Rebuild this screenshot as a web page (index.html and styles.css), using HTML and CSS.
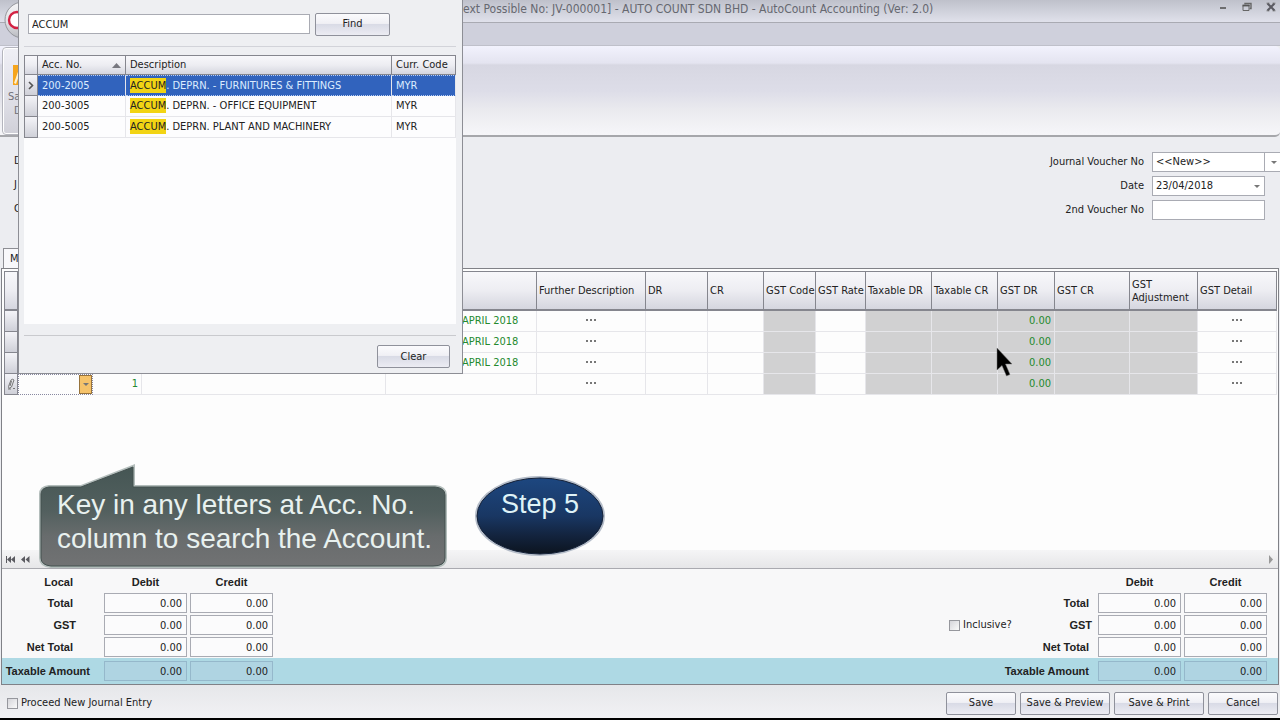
FILE: index.html
```
<!DOCTYPE html>
<html lang="en">
<head>
<meta charset="utf-8">
<title>Journal Entry - AutoCount Accounting</title>
<link rel="stylesheet" href="styles.css">
</head>
<body>
<div class="window">
  <header class="titlebar">
    <div class="title">ext Possible No: JV-000001] - AUTO COUNT SDN BHD - AutoCount Accounting (Ver: 2.0)</div>
    <div class="window-buttons">
      <button class="window-button" aria-label="Minimize"><svg width="10" height="10" viewBox="0 0 10 10"><path d="M2 6h6" stroke="#555" stroke-width="1.6"/></svg></button>
      <button class="window-button" aria-label="Restore"><svg width="10" height="10" viewBox="0 0 10 10" fill="none" stroke="#666"><path d="M3 2.5V1.5H9V6.5H7.5" stroke-width="1.4"/><path d="M1 3.5h6.500M1 3.500v5h6v-5" stroke-width="1"/><path d="M.5 3.500h7" stroke="#555" stroke-width="1.800"/></svg></button>
      <button class="window-button" aria-label="Close"><svg width="10" height="10" viewBox="0 0 10 10"><path d="M1.500 1.500l7 7M8.500 1.500l-7 7" stroke="#5a5a62" stroke-width="2"/><path d="M.5 1.200h3M6.500 1.200h3M.5 8.800h3M6.500 8.800h3" stroke="#666" stroke-width=".8"/></svg></button>
    </div>
  </header>
  <svg class="app-logo" width="38" height="38" viewBox="0 0 38 38">
    <defs><linearGradient id="orb" x1="0" y1="0" x2="0" y2="1"><stop offset="0" stop-color="#f4f4f6"/><stop offset=".55" stop-color="#e2e2e6"/><stop offset="1" stop-color="#b8babf"/></linearGradient></defs>
    <circle cx="19" cy="19" r="18" fill="url(#orb)" stroke="#94969c"/>
    <circle cx="13" cy="19" r="8" fill="#fff" stroke="#d32344" stroke-width="2.400"/>
  </svg>
  <div class="tab-strip"></div>
  <div class="ribbon">
    <button class="ribbon-group">
      <svg width="24" height="22" viewBox="0 0 24 22"><rect width="24" height="20" y="1" fill="#f6a51c"/><path d="M1 19L6 5l2 1L3 20z" fill="#fff2cf"/></svg>
      <span>Sa</span><span class="ribbon-second">D</span>
    </button>
  </div>
  <main class="form">
    <div class="left-labels"><span>D</span><span>J</span><span>O</span></div>
    <div class="fields">
      <label for="voucher">Journal Voucher No</label>
      <div class="combo combo-wide"><select id="voucher"><option>&lt;&lt;New&gt;&gt;</option></select><span class="drop drop-split"><i class="arrow"></i></span></div>
      <label for="date">Date</label>
      <div class="combo"><input id="date" value="23/04/2018"><span class="drop"><i class="arrow"></i></span></div>
      <label for="second">2nd Voucher No</label>
      <div class="combo"><input id="second"></div>
    </div>
  </main>
  <div class="page-tabs"><button class="page-tab">M</button></div>
  <section class="panel">
    <div class="grid-area">
      <table class="grid">
        <colgroup><col class="w14"><col class="w75"><col class="w49"><col class="w244"><col class="w151"><col class="w109"><col class="w62"><col class="w56"><col class="w52"><col class="w50"><col class="w66"><col class="w66"><col class="w57"><col class="w75"><col class="w68"><col></colgroup>
        <thead><tr><th></th><th></th><th></th><th></th><th></th><th>Further Description</th><th>DR</th><th>CR</th><th>GST Code</th><th>GST Rate</th><th>Taxable DR</th><th>Taxable CR</th><th>GST DR</th><th>GST CR</th><th>GST Adjustment</th><th>GST Detail</th></tr></thead>
        <tbody>
          <tr><td class="mark"></td><td></td><td></td><td></td><td class="memo">APRIL 2018</td><td class="dots"><i></i><i></i><i></i></td><td></td><td></td><td class="off"></td><td></td><td class="off"></td><td class="off"></td><td class="off num">0.00</td><td class="off"></td><td class="off"></td><td class="dots"><i></i><i></i><i></i></td></tr>
          <tr><td class="mark"></td><td></td><td></td><td></td><td class="memo">APRIL 2018</td><td class="dots"><i></i><i></i><i></i></td><td></td><td></td><td class="off"></td><td></td><td class="off"></td><td class="off"></td><td class="off num">0.00</td><td class="off"></td><td class="off"></td><td class="dots"><i></i><i></i><i></i></td></tr>
          <tr><td class="mark"></td><td></td><td></td><td></td><td class="memo">APRIL 2018</td><td class="dots"><i></i><i></i><i></i></td><td></td><td></td><td class="off"></td><td></td><td class="off"></td><td class="off"></td><td class="off num">0.00</td><td class="off"></td><td class="off"></td><td class="dots"><i></i><i></i><i></i></td></tr>
          <tr><td class="mark"><svg width="9" height="12" viewBox="0 0 9 12" fill="none" stroke="#777" stroke-width="1"><path d="M1.500 8.500L4 2q1.500-1.500 3 0L4.500 9 2 10.500zM4.500 3L3 8M1 11h3M6 10.500h2"/></svg></td><td class="editor"><div><input aria-label="Acc. No."><button aria-label="Open list"><i class="arrow"></i></button></div></td><td class="num">1</td><td></td><td></td><td class="dots"><i></i><i></i><i></i></td><td></td><td></td><td class="off"></td><td></td><td class="off"></td><td class="off"></td><td class="off num">0.00</td><td class="off"></td><td class="off"></td><td class="dots"><i></i><i></i><i></i></td></tr>
        </tbody>
      </table>
    </div>
    <div class="scrollbar">
      <svg width="34" height="9" viewBox="0 0 34 9" fill="#5a5a60"><path d="M1 1h1v7H1zM6 1v7L2 4.500zM10 1v7L6 4.500zM20 1v7L16 4.500zM24.500 1v7l-4-3.500z"/></svg>
      <svg width="6" height="9" viewBox="0 0 6 9"><path d="M1 0v9l4-4.500z" fill="#999"/></svg>
    </div>
    <div class="totals">
      <div class="total-row head"><div class="group"><b class="name">Local</b><b>Debit</b><b>Credit</b></div><div class="group right"><span></span><b>Debit</b><b>Credit</b></div></div>
      <div class="total-row"><div class="group"><b class="name">Total</b><input aria-label="Local total debit" value="0.00"><input aria-label="Local total credit" value="0.00"></div><div class="group right"><b class="name">Total</b><input aria-label="Total debit" value="0.00"><input aria-label="Total credit" value="0.00"></div></div>
      <div class="total-row"><div class="group"><b class="name gst">GST</b><input aria-label="Local GST debit" value="0.00"><input aria-label="Local GST credit" value="0.00"></div><div class="group right"><div class="with-check"><label class="check"><input type="checkbox">Inclusive?</label><b class="name gst">GST</b></div><input aria-label="GST debit" value="0.00"><input aria-label="GST credit" value="0.00"></div></div>
      <div class="total-row"><div class="group"><b class="name">Net Total</b><input aria-label="Local net debit" value="0.00"><input aria-label="Local net credit" value="0.00"></div><div class="group right"><b class="name">Net Total</b><input aria-label="Net debit" value="0.00"><input aria-label="Net credit" value="0.00"></div></div>
      <div class="total-row taxable"><div class="group"><b class="name wide">Taxable Amount</b><input aria-label="Local taxable debit" value="0.00"><input aria-label="Local taxable credit" value="0.00"></div><div class="group right"><b class="name">Taxable Amount</b><input aria-label="Taxable debit" value="0.00"><input aria-label="Taxable credit" value="0.00"></div></div>
    </div>
  </section>
  <footer class="footer">
    <label class="check"><input type="checkbox">Proceed New Journal Entry</label>
    <div class="actions"><button class="btn w70">Save</button><button class="btn w90">Save &amp; Preview</button><button class="btn w90">Save &amp; Print</button><button class="btn w70">Cancel</button></div>
  </footer>

  <section class="popup">
    <div class="search"><input aria-label="Search accounts" value="ACCUM"><button class="btn">Find</button></div>
    <div class="results">
      <table>
        <colgroup><col class="w14"><col class="w88"><col><col class="w64"></colgroup>
        <thead><tr><th></th><th><div class="sorted">Acc. No.<svg width="9" height="5" viewBox="0 0 9 5"><path d="M0 5L4.500 0 9 5z" fill="#77777f"/></svg></div></th><th>Description</th><th>Curr. Code</th></tr></thead>
        <tbody>
          <tr class="selected"><td class="mark"><svg width="6" height="9" viewBox="0 0 6 9"><path d="M1 1l3.500 3.500L1 8" fill="none" stroke="#555" stroke-width="1.600"/></svg></td><td>200-2005</td><td><mark>ACCUM</mark>. DEPRN. - FURNITURES &amp; FITTINGS</td><td>MYR</td></tr>
          <tr><td class="mark"></td><td>200-3005</td><td><mark>ACCUM</mark>. DEPRN. - OFFICE EQUIPMENT</td><td>MYR</td></tr>
          <tr><td class="mark"></td><td>200-5005</td><td><mark>ACCUM</mark>. DEPRN. PLANT AND MACHINERY</td><td>MYR</td></tr>
        </tbody>
      </table>
    </div>
    <div class="popup-footer"><button class="btn">Clear</button></div>
  </section>

  <div class="callout">
    <svg width="412" height="106" viewBox="0 0 412 106">
      <defs><linearGradient id="slate" x1="0" y1="0" x2="0" y2="1"><stop offset="0" stop-color="#455654"/><stop offset=".45" stop-color="#53605f"/><stop offset=".7" stop-color="#686c6d"/><stop offset="1" stop-color="#717273"/></linearGradient></defs>
      <path d="M12 23H44L96 3V23H398Q408 24 408 31V94Q408 102 396 102H14Q4 101 4 94V30Q4 24 12 23Z" fill="none" stroke="#b3bdbb" stroke-width="4"/>
      <path d="M12 23H44L96 3V23H398Q408 24 408 31V94Q408 102 396 102H14Q4 101 4 94V30Q4 24 12 23Z" fill="url(#slate)" stroke="#43504f"/>
    </svg>
    <p>Key in any letters at Acc. No.<br>column to search the Account.</p>
  </div>
  <div class="step">
    <svg width="132" height="82" viewBox="0 0 132 82">
      <defs><linearGradient id="navy" x1="0" y1="0" x2="0" y2="1"><stop offset="0" stop-color="#1d4780"/><stop offset=".5" stop-color="#193763"/><stop offset=".75" stop-color="#13243f"/><stop offset="1" stop-color="#0c141f"/></linearGradient></defs>
      <ellipse cx="66" cy="41" rx="63" ry="38" fill="none" stroke="#b5bdc9" stroke-width="4"/>
      <ellipse cx="66" cy="41" rx="63" ry="38" fill="url(#navy)" stroke="#142138" stroke-width="1"/>
    </svg>
    <p>Step 5</p>
  </div>
  <svg class="cursor" width="18" height="32" viewBox="0 0 18 32"><path d="M1 1V23L6 18.500L10.500 29L14 27.500L9.500 17H16Z" fill="#000" stroke="#777" stroke-width=".5"/></svg>
</div>
</body>
</html>
```
FILE: styles.css
```
* { box-sizing: border-box; }
body { margin: 0; background: #ecedf1; color: #222; font: 11px/14px "DejaVu Sans Condensed", Tahoma, sans-serif; }
button, input, select { font: inherit; color: inherit; margin: 0; }
button { padding: 0; }
p { margin: 0; }

.window { position: relative; display: flex; flex-direction: column; min-height: 100vh; overflow: hidden; border-bottom: 2px solid #000; }
.titlebar { display: flex; justify-content: space-between; height: 23px; padding-left: 463px; background: linear-gradient(#bfc1cb, #e0e1eb); border-bottom: 1px solid #a9aab2; }
.title { font-size: 12px; line-height: 18px; color: #666870; white-space: nowrap; }
.window-buttons { display: flex; gap: 14px; padding: 2px 4px 0 0; }
.window-button { display: flex; width: 10px; height: 10px; border: 0; background: none; }
.app-logo { position: absolute; left: 4px; top: 1px; }
.tab-strip { height: 23px; background: #cfd0dc; border-bottom: 1px solid #bfc0ca; }
.ribbon { height: 91px; padding: 1px 0 0 2px; border-bottom: 2px solid #a6a7ab; border-radius: 0 5px 5px 0; background: linear-gradient(#f2f2fd 0, #e4e4f0 17px, #d7d7e2 19px, #dddde8 45px, #ebebef 65px, #f6f6f9 100%); }
.ribbon-group { display: flex; flex-direction: column; align-items: flex-start; width: 60px; height: 88px; padding: 15px 0 0 9px; color: #707078; border: 2px solid #fff; outline: 1px solid #b4b5bd; outline-offset: -1px; border-radius: 4px; background: linear-gradient(#efeff5, #dcdce4 70%, #d0d0d8); }
.ribbon-group svg { margin: 0 0 4px; }
.ribbon-group span { margin-left: -5px; }
.ribbon-group .ribbon-second { margin-left: 1px; }

.form { display: flex; justify-content: space-between; padding: 15px 0 0 14px; height: 111px; }
.left-labels { display: flex; flex-direction: column; gap: 10px; padding-top: 2px; }
.fields { display: grid; grid-template-columns: auto 128px; column-gap: 8px; row-gap: 4px; align-content: start; align-items: center; text-align: right; }
.combo { position: relative; display: flex; width: 113px; height: 20px; border: 1px solid #a9abb3; background: #fff; }
.combo-wide { width: 128px; border-right: 0; }
.combo input, .combo select { flex: 1; min-width: 0; padding: 0 3px; border: 0; background: none; appearance: none; outline: 0; }
.drop { display: flex; width: 14px; align-items: center; justify-content: center; }
.drop-split { width: 16px; padding-left: 3px; border-left: 1px solid #a9abb3; }
.arrow { width: 0; height: 0; border: 3px solid transparent; border-top-color: #777; border-bottom: 0; }
.page-tabs { display: flex; height: 20px; padding-left: 3px; }
.page-tab { width: 60px; padding-left: 6px; text-align: left; background: #f8f8fb; border: 1px solid #8d8e94; border-bottom: 0; }

.panel { flex: 1; display: flex; flex-direction: column; margin: 0 1px; border: 1px solid #808187; background: #fdfdfd; }
.grid-area { flex: 1; padding: 2px 1px 0 2px; }
table { width: 100%; table-layout: fixed; border-collapse: separate; border-spacing: 0; }
.w14 { width: 14px; } .w75 { width: 75px; } .w49 { width: 49px; } .w244 { width: 244px; } .w151 { width: 151px; } .w109 { width: 109px; } .w62 { width: 62px; } .w56 { width: 56px; } .w52 { width: 52px; } .w50 { width: 50px; } .w66 { width: 66px; } .w57 { width: 57px; } .w68 { width: 68px; } .w88 { width: 88px; } .w64 { width: 64px; } .w70 { width: 70px; } .w90 { width: 90px; }
th { padding: 0 3px; text-align: left; font-weight: normal; border: 1px solid #85868e; border-width: 1px 1px 1px 0; background: linear-gradient(#f8f8fb, #ededf2 50%, #d5d6df); }
.grid th { height: 40px; padding: 0 2px; line-height: 13px; border-bottom-width: 2px; }
.grid th:first-child { border-left-width: 1px; }
.grid th:nth-child(n+9) { white-space: nowrap; }
.grid th:nth-child(15) { white-space: normal; }
td { padding: 0 3px; white-space: nowrap; }
.grid td { height: 21px; border: 1px solid #e6e6ea; border-width: 0 1px 1px 0; color: #248a2e; }
.grid td.off { background: #d1d1d2; }
td.mark { padding: 0; text-align: center; background: linear-gradient(#f4f4f8, #cfd0d8); }
.grid td.mark { border: 1px solid #85868e; border-top: 0; }
.mark svg { display: block; margin: auto; }
.num { text-align: right; }
.memo { padding-left: 76px; }
.grid td.dots { text-align: center; font-size: 0; }
.dots i { display: inline-block; width: 2px; height: 2px; margin: 0 1px; background: #777; }
.grid td.editor { padding: 0; border: 1px dotted #8888a0; }
.editor div { display: flex; height: 19px; }
.editor input { flex: 1; min-width: 0; border: 0; background: none; }
.editor button { display: flex; align-items: center; justify-content: center; width: 13px; border: 1px solid #97733c; background: #f6c36a; }
.scrollbar { display: flex; justify-content: space-between; align-items: center; height: 19px; padding: 0 4px 0 3px; background: linear-gradient(#f5f5f6, #e6e6e8); border-bottom: 1px solid #aaaab0; }

.totals { background: #f8f8f9; }
.total-row { display: flex; justify-content: space-between; align-items: center; height: 22px; padding: 0 11px 0 2px; }
.total-row.head { height: 23px; padding-top: 3px; }
.total-row.taxable { height: 26px; background: #aed9e4; }
.group { display: grid; grid-template-columns: 97px 83px 83px; column-gap: 3px; align-items: center; }
.group.right { grid-template-columns: 146px 83px 83px; }
.group b { font-family: "Liberation Sans", Arial, sans-serif; }
.group > b { text-align: center; }
.group > b.name { text-align: right; padding-right: 28px; }
.group > b.gst { padding-right: 25px; }
.group > b.wide { padding-right: 11px; white-space: nowrap; }
.group.right .name { padding-right: 6px; }
.group.right .gst { padding-right: 3px; }
.group > input { width: 100%; height: 20px; padding: 0 4px; text-align: right; border: 1px solid #a9abb3; background: #fbfbfc; }
.taxable .group > input { border-color: #95b8cb; background: #afd4e2; }
.with-check { display: flex; justify-content: space-between; align-items: center; }
.check { display: flex; align-items: center; gap: 3px; }
.check input { appearance: none; width: 11px; height: 11px; border: 1px solid #96979d; background: linear-gradient(135deg, #d5d5da, #fafafa); }

.footer { display: flex; justify-content: space-between; align-items: center; height: 33px; padding: 3px 2px 0 7px; background: linear-gradient(#e6e7ea, #f1f1f4); }
.actions { display: flex; gap: 4px; }
.btn { height: 23px; border: 1px solid #8f919b; border-radius: 2px; background: linear-gradient(#fbfbfd, #f0f0f5 45%, #d9dbe6 50%, #ececf3); }

.popup { position: absolute; left: 18px; top: 0; display: flex; flex-direction: column; width: 445px; height: 374px; padding: 0 6px 0 5px; border: 1px solid #8d8e95; border-top: 0; background: #eeeff2; }
.search { display: flex; gap: 5px; align-items: center; height: 47px; padding: 2px 0 0 4px; border-bottom: 1px solid #d2d3d9; }
.search input { width: 282px; height: 20px; padding: 0 3px; border: 1px solid #a9abb3; background: #fff; }
.search .btn { width: 75px; }
.results { flex: 1; margin: 8px 0 11px; background: #fdfdfe; }
.results th { height: 20px; }
.results th, .results td { padding: 0 4px; }
.results th:first-child { border-left-width: 1px; }
.results td { height: 21px; border: 1px solid #e6e6ea; border-width: 0 1px 1px 0; }
.results td.mark { padding: 0; border: 1px solid #85868e; border-top: 0; }
.sorted { display: flex; justify-content: space-between; align-items: center; }
.selected td:not(.mark) { color: #dcecff; background: #3163bd; border-top: 1px dotted #b6cdf5; border-bottom: 1px dotted #b6cdf5; }
mark { padding: 1px 0; color: #222; background: #f2d414; }
.popup-footer { display: flex; justify-content: flex-end; height: 38px; padding: 9px 6px 0 0; border-top: 1px solid #c9cace; }
.popup-footer .btn { width: 73px; }

.callout { position: absolute; left: 37px; top: 464px; font: 28px/34px "Liberation Sans", Arial, sans-serif; color: #e8f1ef; }
.callout svg, .step svg { display: block; }
.callout p { position: absolute; left: 20px; top: 24px; white-space: nowrap; }
.step { position: absolute; left: 474px; top: 475px; font: 27px/34px "Liberation Sans", Arial, sans-serif; color: #dff3f7; }
.step p { position: absolute; left: 0; right: 0; top: 12px; text-align: center; }
.cursor { position: absolute; left: 996px; top: 347px; }
```
